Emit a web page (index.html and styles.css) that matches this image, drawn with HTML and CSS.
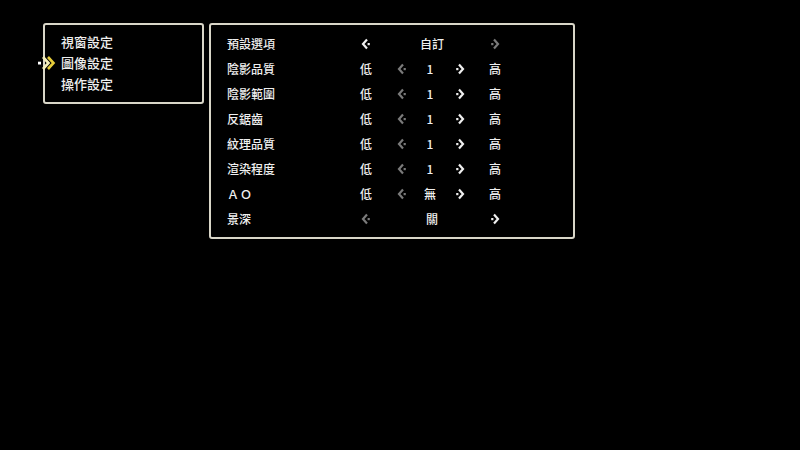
FILE: index.html
```html
<!DOCTYPE html>
<html lang="zh-Hant">
<head>
<meta charset="utf-8">
<title>設定</title>
<link rel="stylesheet" href="styles.css">
</head>
<body>
<div class="screen">
  <div class="panel menu">
    <div class="cursor">
      <svg width="20" height="16" viewBox="0 0 20 16">
        <polyline points="6,2 11.5,8 6,14" fill="none" stroke="#f4eeb8" stroke-width="2.6"/>
        <polyline points="11,2 16.5,8 11,14" fill="none" stroke="#e6cc3a" stroke-width="2.6"/>
        <rect x="1" y="6.7" width="3" height="2.8" fill="#ffffff"/>
      </svg>
    </div>
    <div class="item">視窗設定</div>
    <div class="item">圖像設定</div>
    <div class="item">操作設定</div>
  </div>
  <div class="panel options">
    <div class="row">
      <span class="label">預設選項</span>
      <span class="c1"><svg class="arr" viewBox="0 0 10 12"><polyline points="6,1.5 2,6 6,10.5" fill="none" stroke="currentColor" stroke-width="2.2"/><rect x="6.6" y="5" width="2.2" height="2.2" fill="currentColor"/></svg></span>
      <span class="mid">自訂</span>
      <span class="c5 dim"><svg class="arr" viewBox="0 0 10 12"><polyline points="4,1.5 8,6 4,10.5" fill="none" stroke="currentColor" stroke-width="2.2"/><rect x="1.2" y="5" width="2.2" height="2.2" fill="currentColor"/></svg></span>
    </div>
    <div class="row">
      <span class="label">陰影品質</span>
      <span class="c1">低</span>
      <span class="c2 dim"><svg class="arr" viewBox="0 0 10 12"><polyline points="6,1.5 2,6 6,10.5" fill="none" stroke="currentColor" stroke-width="2.2"/><rect x="6.6" y="5" width="2.2" height="2.2" fill="currentColor"/></svg></span>
      <span class="c3">1</span>
      <span class="c4"><svg class="arr" viewBox="0 0 10 12"><polyline points="4,1.5 8,6 4,10.5" fill="none" stroke="currentColor" stroke-width="2.2"/><rect x="1.2" y="5" width="2.2" height="2.2" fill="currentColor"/></svg></span>
      <span class="c5">高</span>
    </div>
    <div class="row">
      <span class="label">陰影範圍</span>
      <span class="c1">低</span>
      <span class="c2 dim"><svg class="arr" viewBox="0 0 10 12"><polyline points="6,1.5 2,6 6,10.5" fill="none" stroke="currentColor" stroke-width="2.2"/><rect x="6.6" y="5" width="2.2" height="2.2" fill="currentColor"/></svg></span>
      <span class="c3">1</span>
      <span class="c4"><svg class="arr" viewBox="0 0 10 12"><polyline points="4,1.5 8,6 4,10.5" fill="none" stroke="currentColor" stroke-width="2.2"/><rect x="1.2" y="5" width="2.2" height="2.2" fill="currentColor"/></svg></span>
      <span class="c5">高</span>
    </div>
    <div class="row">
      <span class="label">反鋸齒</span>
      <span class="c1">低</span>
      <span class="c2 dim"><svg class="arr" viewBox="0 0 10 12"><polyline points="6,1.5 2,6 6,10.5" fill="none" stroke="currentColor" stroke-width="2.2"/><rect x="6.6" y="5" width="2.2" height="2.2" fill="currentColor"/></svg></span>
      <span class="c3">1</span>
      <span class="c4"><svg class="arr" viewBox="0 0 10 12"><polyline points="4,1.5 8,6 4,10.5" fill="none" stroke="currentColor" stroke-width="2.2"/><rect x="1.2" y="5" width="2.2" height="2.2" fill="currentColor"/></svg></span>
      <span class="c5">高</span>
    </div>
    <div class="row">
      <span class="label">紋理品質</span>
      <span class="c1">低</span>
      <span class="c2 dim"><svg class="arr" viewBox="0 0 10 12"><polyline points="6,1.5 2,6 6,10.5" fill="none" stroke="currentColor" stroke-width="2.2"/><rect x="6.6" y="5" width="2.2" height="2.2" fill="currentColor"/></svg></span>
      <span class="c3">1</span>
      <span class="c4"><svg class="arr" viewBox="0 0 10 12"><polyline points="4,1.5 8,6 4,10.5" fill="none" stroke="currentColor" stroke-width="2.2"/><rect x="1.2" y="5" width="2.2" height="2.2" fill="currentColor"/></svg></span>
      <span class="c5">高</span>
    </div>
    <div class="row">
      <span class="label">渲染程度</span>
      <span class="c1">低</span>
      <span class="c2 dim"><svg class="arr" viewBox="0 0 10 12"><polyline points="6,1.5 2,6 6,10.5" fill="none" stroke="currentColor" stroke-width="2.2"/><rect x="6.6" y="5" width="2.2" height="2.2" fill="currentColor"/></svg></span>
      <span class="c3">1</span>
      <span class="c4"><svg class="arr" viewBox="0 0 10 12"><polyline points="4,1.5 8,6 4,10.5" fill="none" stroke="currentColor" stroke-width="2.2"/><rect x="1.2" y="5" width="2.2" height="2.2" fill="currentColor"/></svg></span>
      <span class="c5">高</span>
    </div>
    <div class="row">
      <span class="label ao">ＡＯ</span>
      <span class="c1">低</span>
      <span class="c2 dim"><svg class="arr" viewBox="0 0 10 12"><polyline points="6,1.5 2,6 6,10.5" fill="none" stroke="currentColor" stroke-width="2.2"/><rect x="6.6" y="5" width="2.2" height="2.2" fill="currentColor"/></svg></span>
      <span class="c3">無</span>
      <span class="c4"><svg class="arr" viewBox="0 0 10 12"><polyline points="4,1.5 8,6 4,10.5" fill="none" stroke="currentColor" stroke-width="2.2"/><rect x="1.2" y="5" width="2.2" height="2.2" fill="currentColor"/></svg></span>
      <span class="c5">高</span>
    </div>
    <div class="row">
      <span class="label">景深</span>
      <span class="c1 dim"><svg class="arr" viewBox="0 0 10 12"><polyline points="6,1.5 2,6 6,10.5" fill="none" stroke="currentColor" stroke-width="2.2"/><rect x="6.6" y="5" width="2.2" height="2.2" fill="currentColor"/></svg></span>
      <span class="mid">關</span>
      <span class="c5"><svg class="arr" viewBox="0 0 10 12"><polyline points="4,1.5 8,6 4,10.5" fill="none" stroke="currentColor" stroke-width="2.2"/><rect x="1.2" y="5" width="2.2" height="2.2" fill="currentColor"/></svg></span>
    </div>
  </div>
</div>
</body>
</html>
```
FILE: styles.css
```css
html, body {
  margin: 0;
  padding: 0;
  background: #000;
  width: 800px;
  height: 450px;
  overflow: hidden;
}
body {
  font-family: "Noto Sans CJK TC", "Noto Sans", sans-serif;
  font-weight: 500;
  color: #efefef;
}
.screen {
  display: flex;
  align-items: flex-start;
  gap: 5px;
  padding: 23px 0 0 43px;
}
.panel {
  border: 2px solid #d9d6c8;
  border-radius: 3px;
  box-sizing: border-box;
}
.menu {
  position: relative;
  width: 161px;
  height: 81px;
  padding: 6px 0 0 16px;
  font-size: 13px;
  line-height: 21px;
}
.cursor {
  position: absolute;
  left: -8px;
  top: 30px;
  line-height: 0;
}
.item {
  height: 21px;
}
.options {
  width: 366px;
  height: 216px;
  padding: 6px 0 0 16px;
  font-size: 12px;
}
.row {
  display: grid;
  grid-template-columns: 121px 36px 36px 20px 40px 30px;
  height: 25px;
  align-items: center;
  line-height: 25px;
}
.row > span {
  display: flex;
  justify-content: center;
  align-items: center;
  height: 25px;
}
.row > .label {
  justify-content: flex-start;
}
.label.ao {
  letter-spacing: 1px;
}
.c1 { grid-column: 2; }
.c2 { grid-column: 3; }
.c3 { grid-column: 4; }
.c4 { grid-column: 5; }
.c5 { grid-column: 6; }
.mid { grid-column: 3 / 6; }
.dim {
  color: #7a7a7a;
}
.arr {
  width: 10px;
  height: 12px;
  display: block;
}
```
